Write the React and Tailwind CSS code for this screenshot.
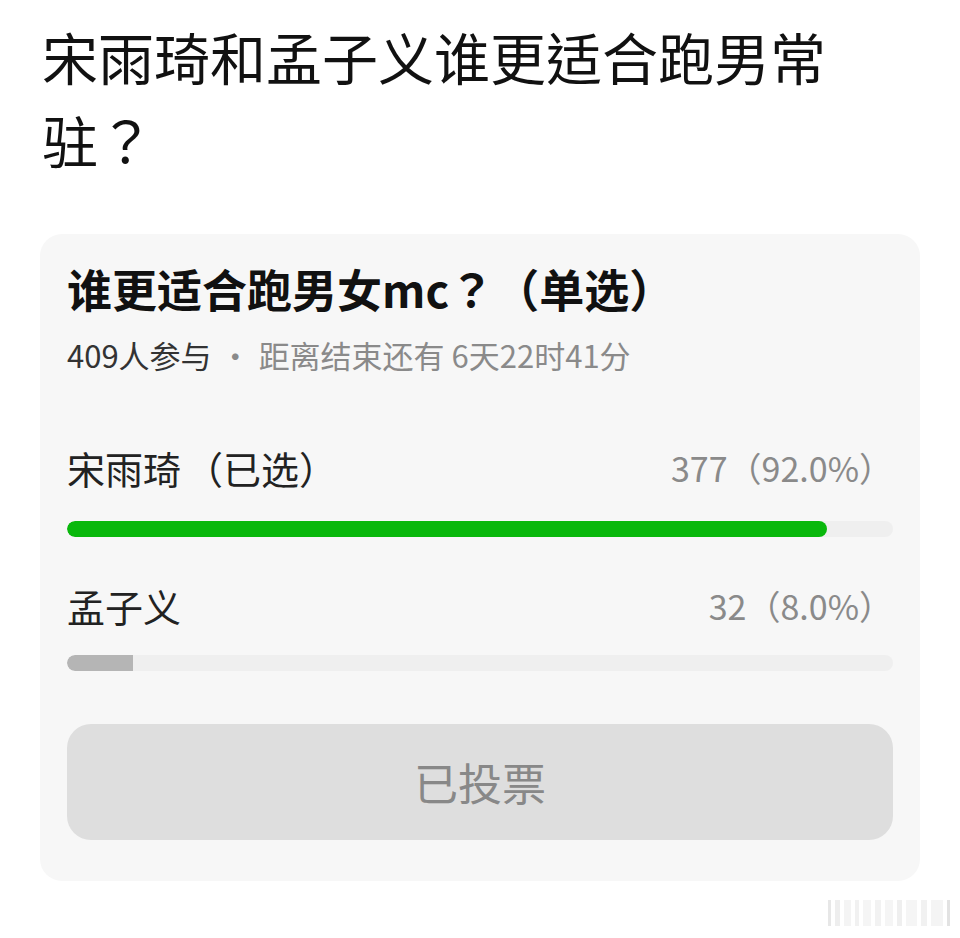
export default function App() {
  const font = { fontFamily: '"Noto Sans CJK SC", "Noto Sans", sans-serif' };
  const q = { fontFamily: '"Noto Sans CJK TC", "Noto Sans CJK SC", sans-serif' };
  return (
    <div className="w-[960px] h-[938px] bg-white relative overflow-hidden" style={font}>
      <div className="pl-[42px] pr-[40px] pt-[14px]">
        <h1 className="text-[56px] leading-[83px] text-[#111] font-normal w-[820px]" style={q}>
          宋雨琦和孟子义谁更适合跑男常驻？
        </h1>
        <div className="mt-[54px] -ml-[2px] w-[880px] rounded-[22px] bg-[#f7f7f7] px-[27px] pt-[24px] pb-[41px]">
          <div className="h-[62px] flex items-center text-[45px] font-bold text-[#111]">
            <span>谁更适合跑男女mc</span>
            <span style={q}>？</span>
            <span>（单选）</span>
          </div>
          <div className="mt-[13px] h-[44px] flex items-center text-[31px] text-[#8a8a8a]">
            <span className="text-[#333]">409人参与</span>
            <span className="mx-[8px]">·</span>
            <span>距离结束还有 6天22时41分</span>
          </div>
          <div className="mt-[65px] h-[50px] flex items-center justify-between">
            <span className="text-[38px] text-[#222] flex">
              <span>宋雨琦</span>
              <span className="ml-[4px]">（已选）</span>
            </span>
            <span className="text-[34px] text-[#8a8a8a]">377（92.0%）</span>
          </div>
          <div className="mt-[29px] h-[16px] rounded-full bg-[#efefef] overflow-hidden">
            <div className="h-full w-[92%] rounded-full bg-[#09b80c]" />
          </div>
          <div className="mt-[43px] h-[50px] flex items-center justify-between">
            <span className="text-[38px] text-[#222]">孟子义</span>
            <span className="text-[34px] text-[#8a8a8a]">32（8.0%）</span>
          </div>
          <div className="mt-[25px] h-[16px] rounded-full bg-[#efefef] overflow-hidden">
            <div className="h-full w-[8%] rounded-l-full bg-[#b5b5b5]" />
          </div>
          <div className="mt-[53px] h-[116px] rounded-[24px] bg-[#dedede] flex items-center justify-center text-[44px] text-[#888]">
            已投票
          </div>
        </div>
      </div>
      <div className="absolute left-[828px] top-[900px] w-[122px] h-[26px] flex gap-[4px] opacity-60">
        <div className="w-[3px] bg-[#d8d8d8]" />
        <div className="w-[6px] bg-[#e4e4e4]" />
        <div className="w-[8px] bg-[#eeeeee]" />
        <div className="w-[5px] bg-[#e8e8e8]" />
        <div className="w-[9px] bg-[#efefef]" />
        <div className="w-[7px] bg-[#eaeaea]" />
        <div className="w-[10px] bg-[#f0f0f0]" />
        <div className="w-[6px] bg-[#e6e6e6]" />
        <div className="w-[12px] bg-[#efefef]" />
        <div className="w-[8px] bg-[#e9e9e9]" />
        <div className="w-[14px] bg-[#eeeeee]" />
        <div className="w-[3px] bg-[#d0d0d0]" />
      </div>
    </div>
  );
}
